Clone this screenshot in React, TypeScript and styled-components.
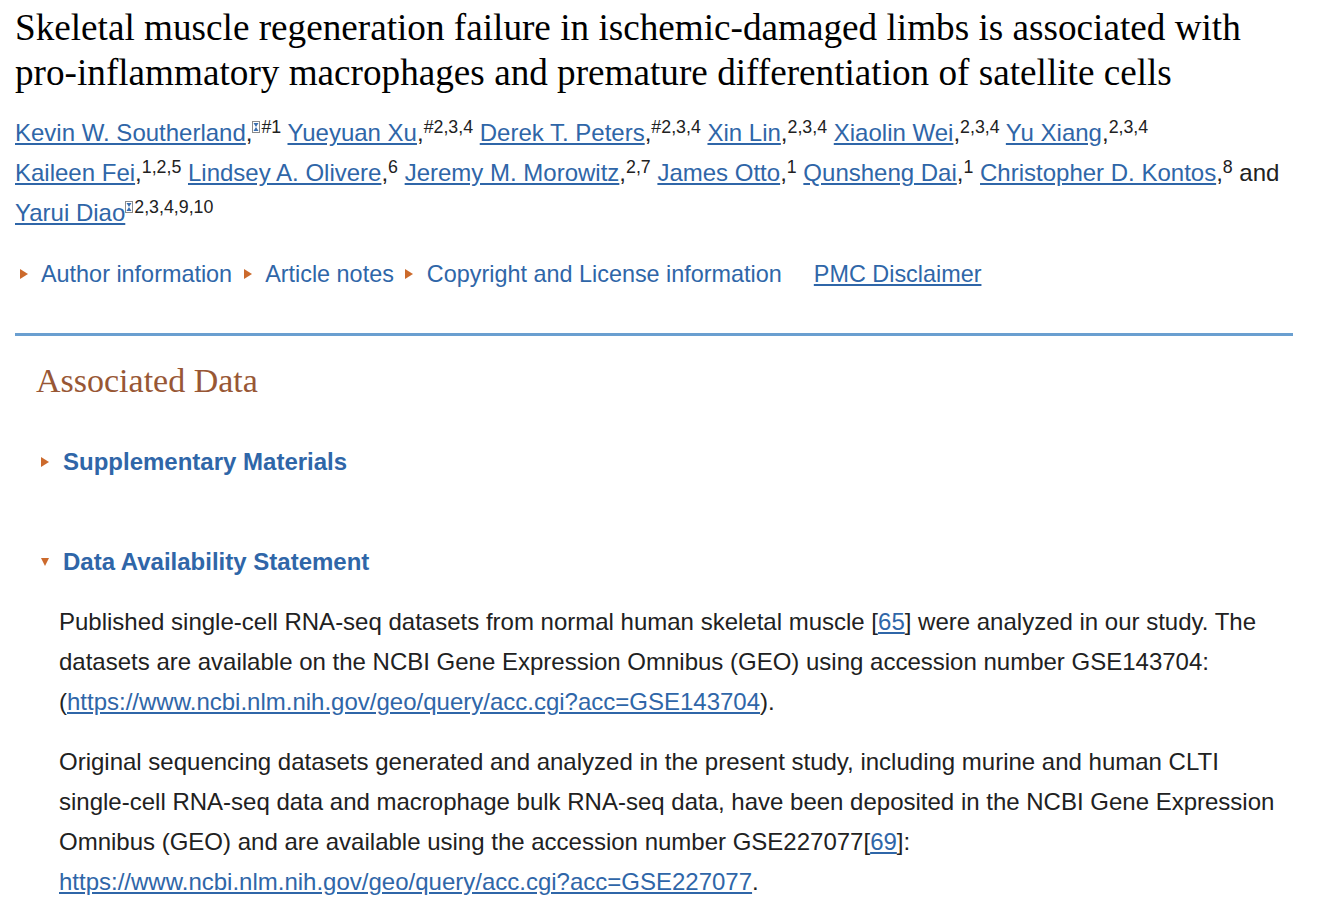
import React from "react";
import styled, { createGlobalStyle } from "styled-components";

const GlobalStyle = createGlobalStyle`
  body {
    margin: 8px;
    background: #fff;
    font-family: "Liberation Sans", Arial, sans-serif;
    color: #212121;
  }
`;

const Page = styled.div`
  padding: 0 7px;
  width: 1278px;
`;

const Title = styled.h1`
  font-family: "Liberation Serif", "Times New Roman", serif;
  font-weight: normal;
  font-size: 37.2px;
  line-height: 45px;
  margin: -3px 0 18px;
  color: #000;
  white-space: nowrap;
`;

const Authors = styled.div`
  font-size: 24px;
  line-height: 40px;
  color: #212121;
  white-space: nowrap;
`;

const A = styled.a`
  color: #2f66a8;
  text-decoration: underline;
  text-underline-offset: 2px;
`;

const Sup = styled.sup`
  font-size: 17.8px;
  vertical-align: 8px;
  line-height: 0;
`;

const Tofu = styled.span`
  display: inline-block;
  width: 8px;
  height: 12px;
  border: 1px solid #8a8a8a;
  margin-right: 1px;
  box-sizing: border-box;
  svg {
    display: block;
  }
`;

const Mail = () => (
  <Tofu>
    <svg width="6" height="10" viewBox="0 0 6 10">
      <path d="M0.5 1 L5.5 1 L3 5 L5.5 9 L0.5 9 L3 5 Z" fill="#3b6fb0" />
    </svg>
  </Tofu>
);

const MetaRow = styled.div`
  display: flex;
  align-items: center;
  margin-top: 21px;
  padding-left: 4px;
  font-size: 23.4px;
  line-height: 40px;
`;

const Toggle = styled.span`
  display: inline-flex;
  align-items: center;
  gap: 13px;
  margin-right: 11px;
  color: #2f66a8;
`;

const TriBox = styled.span`
  display: inline-flex;
  justify-content: center;
  align-items: center;
  width: 9px;
`;

const TriShape = styled.span<{ $open?: boolean }>`
  display: inline-block;
  width: 0;
  height: 0;
  ${(p) =>
    p.$open
      ? `border-left: 4.5px solid transparent; border-right: 4.5px solid transparent; border-top: 8px solid #cc6a2c;`
      : `border-top: 5px solid transparent; border-bottom: 5px solid transparent; border-left: 8px solid #cc6a2c;`}
`;

const Tri = ({ open }: { open?: boolean }) => (
  <TriBox>
    <TriShape $open={open} />
  </TriBox>
);

const Disclaimer = styled(A)`
  margin-left: 21px;
`;

const Rule = styled.hr`
  border: none;
  height: 3px;
  background: #6a9fd0;
  margin: 39px 0 0;
`;

const Section = styled.section`
  padding: 0 0 0 21px;
`;

const SectionTitle = styled.h2`
  font-family: "Liberation Serif", "Times New Roman", serif;
  font-weight: normal;
  color: #985735;
  font-size: 34px;
  line-height: 40px;
  margin: 25px 0 0;
`;

const SubHead = styled.h3<{ $first?: boolean }>`
  display: flex;
  align-items: center;
  gap: 14px;
  margin: ${(p) => (p.$first ? "50px" : "78px")} 0 0 4px;
  font-size: 24px;
  line-height: 22px;
  font-weight: bold;
  color: #2f66a8;
`;

const Body = styled.div`
  padding: 29px 0 0 23px;
`;

const Para = styled.p`
  font-size: 24px;
  line-height: 40px;
  margin: 0 0 20px;
  color: #212121;
`;

export default function App() {
  return (
    <Page>
      <GlobalStyle />
      <Title>
        Skeletal muscle regeneration failure in ischemic-damaged limbs is associated with
        <br />
        pro-inflammatory macrophages and premature differentiation of satellite cells
      </Title>
      <Authors>
        <A href="#">Kevin W. Southerland</A>,
        <Sup>
          <Mail />
          #1
        </Sup>{" "}
        <A href="#">Yueyuan Xu</A>,<Sup>#2,3,4</Sup> <A href="#">Derek T. Peters</A>,
        <Sup>#2,3,4</Sup> <A href="#">Xin Lin</A>,<Sup>2,3,4</Sup> <A href="#">Xiaolin Wei</A>,
        <Sup>2,3,4</Sup> <A href="#">Yu Xiang</A>,<Sup>2,3,4</Sup>
        <br />
        <A href="#">Kaileen Fei</A>,<Sup>1,2,5</Sup> <A href="#">Lindsey A. Olivere</A>,
        <Sup>6</Sup> <A href="#">Jeremy M. Morowitz</A>,<Sup>2,7</Sup> <A href="#">James Otto</A>,
        <Sup>1</Sup> <A href="#">Qunsheng Dai</A>,<Sup>1</Sup>{" "}
        <A href="#">Christopher D. Kontos</A>,<Sup>8</Sup> and
        <br />
        <A href="#">Yarui Diao</A>
        <Sup>
          <Mail />
          2,3,4,9,10
        </Sup>
      </Authors>
      <MetaRow>
        <Toggle>
          <Tri />
          Author information
        </Toggle>
        <Toggle>
          <Tri />
          Article notes
        </Toggle>
        <Toggle>
          <Tri />
          Copyright and License information
        </Toggle>
        <Disclaimer href="#">PMC Disclaimer</Disclaimer>
      </MetaRow>
      <Rule />
      <Section>
        <SectionTitle>Associated Data</SectionTitle>
        <SubHead $first>
          <Tri />
          Supplementary Materials
        </SubHead>
        <SubHead>
          <Tri open />
          Data Availability Statement
        </SubHead>
        <Body>
          <Para>
            Published single-cell RNA-seq datasets from normal human skeletal muscle [
            <A href="#">65</A>] were analyzed in our study. The datasets are available on the NCBI
            Gene Expression Omnibus (GEO) using accession number GSE143704: (
            <A href="#">https://www.ncbi.nlm.nih.gov/geo/query/acc.cgi?acc=GSE143704</A>).
          </Para>
          <Para>
            Original sequencing datasets generated and analyzed in the present study, including
            murine and human CLTI single-cell RNA-seq data and macrophage bulk RNA-seq data, have
            been deposited in the NCBI Gene Expression Omnibus (GEO) and are available using the
            accession number GSE227077[<A href="#">69</A>]:{" "}
            <A href="#">https://www.ncbi.nlm.nih.gov/geo/query/acc.cgi?acc=GSE227077</A>.
          </Para>
        </Body>
      </Section>
    </Page>
  );
}
